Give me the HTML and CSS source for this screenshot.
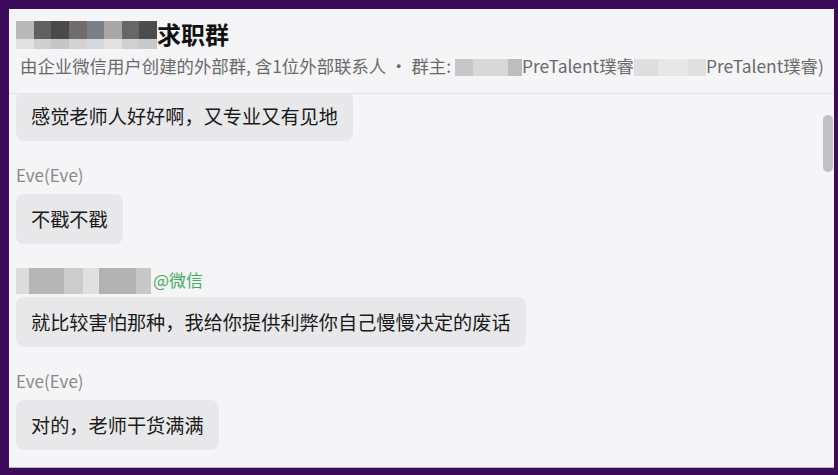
FILE: index.html
```html
<!DOCTYPE html>
<html lang="zh-CN">
<head>
  <meta charset="UTF-8" />
  <title>求职群</title>
  <link rel="stylesheet" href="styles.css">
</head>
<body>
  <div class="window">
    <div class="chat-header">
      <div class="title-row">
        <div class="mosaic title-mosaic">
          <div class="row">
            <span style="background:#b9b7b7"></span>
            <span style="background:#5f6060"></span>
            <span style="background:#4b4849"></span>
            <span style="background:#706c6c"></span>
            <span style="background:#7b8087"></span>
            <span style="background:#aaa6a4"></span>
            <span style="background:#676767"></span>
            <span style="background:#4c4c4c"></span>
          </div>
          <div class="row light">
            <span style="background:#e2e2e2"></span>
            <span style="background:#cfcfcf"></span>
            <span style="background:#c6c6c6"></span>
            <span style="background:#d2d2d2"></span>
            <span style="background:#d6d8db"></span>
            <span style="background:#e4e2e1"></span>
            <span style="background:#d0d0d0"></span>
            <span style="background:#c9c9c9"></span>
          </div>
        </div>
        <h1>求职群</h1>
      </div>
      <div class="subtitle">
        由企业微信用户创建的外部群, 含1位外部联系人 · 群主:
        <span class="blur-box dark"><i style="width:18px;background:#c8c8c8"></i><i style="width:35px;background:#d8d8d8"></i><i style="width:14px;background:#bdbdbd"></i></span>PreTalent璞睿<span class="blur-box soft"><i style="width:24px;background:#dedede"></i><i style="width:30px;background:#e7e7e7"></i><i style="width:18px;background:#dfdfdf"></i></span>PreTalent璞睿)
      </div>
    </div>

    <div class="messages">
      <div class="msg first">
        <div class="bubble">感觉老师人好好啊，又专业又有见地</div>
      </div>

      <div class="msg">
        <div class="sender">Eve(Eve)</div>
        <div class="bubble">不戳不戳</div>
      </div>

      <div class="msg">
        <div class="sender">
          <div class="mosaic name-mosaic">
            <span style="width:13px;background:#dcdcdc"></span>
            <span style="width:35px;background:#b6b6b6"></span>
            <span style="width:19px;background:#cccccc"></span>
            <span style="width:16px;background:#e0e0e0"></span>
            <span style="width:37px;background:#b2b2b2"></span>
            <span style="width:15px;background:#c8c8c8"></span>
          </div>
          <span class="wechat">@微信</span>
        </div>
        <div class="bubble">就比较害怕那种，我给你提供利弊你自己慢慢决定的废话</div>
      </div>

      <div class="msg">
        <div class="sender">Eve(Eve)</div>
        <div class="bubble">对的，老师干货满满</div>
      </div>

      <div class="scroll-thumb"></div>
    </div>
  </div>
</body>
</html>
```

FILE: styles.css
```css
body {
  margin: 0;
  background-color: #3c0b5c;
  font-family: "Noto Sans CJK SC", "Noto Sans", sans-serif;
  padding: 9px 4px 7px 9px;
  height: 475px;
  box-sizing: border-box;
  overflow: hidden;
}

.window {
  background-color: #f5f5f7;
  height: 459px;
  display: flex;
  flex-direction: column;
  overflow: hidden;
  border-bottom: 1px solid #b9b2c0;
  box-sizing: border-box;
}

.chat-header {
  padding: 10px 8px 0 7px;
  height: 85px;
  box-sizing: border-box;
  border-bottom: 1px solid #e4e4e6;
  flex-shrink: 0;
}

.title-row {
  display: flex;
  align-items: center;
  height: 30px;
}

.title-row h1 {
  margin: 0;
  font-size: 24px;
  font-weight: 700;
  color: #111;
  line-height: 30px;
}

.mosaic {
  display: flex;
}

.title-mosaic {
  flex-direction: column;
  width: 141px;
  height: 28px;
  margin-top: 2px;
}

.title-mosaic .row {
  display: flex;
  height: 18px;
}

.title-mosaic .row.light {
  height: 10px;
}

.title-mosaic .row span {
  flex: 1;
}

.subtitle {
  margin: 6px 0 0 4px;
  font-size: 17.4px;
  line-height: 22px;
  color: #6a6a6a;
  white-space: nowrap;
}

.blur-box {
  display: inline-flex;
  vertical-align: -3px;
  height: 17px;
}

.blur-box i {
  display: block;
}

.messages {
  position: relative;
  flex: 1;
  overflow: hidden;
  padding: 0 7px;
}

.msg {
  margin-top: 24px;
}

.msg.first {
  margin-top: -3px;
}

.sender {
  display: flex;
  align-items: flex-start;
  height: 24px;
  line-height: 20px;
  margin-bottom: 5px;
  font-size: 17px;
  color: #888;
}

.name-mosaic {
  height: 26px;
  background: linear-gradient(to bottom, transparent 20px, rgba(255, 255, 255, 0.5) 20px);
}

.name-mosaic span {
  display: block;
  height: 100%;
}

.wechat {
  color: #3fac5c;
  margin-left: 2px;
  line-height: 24px;
}

.bubble {
  display: inline-block;
  background-color: #e8e8ea;
  color: #1a1a1a;
  font-size: 19.2px;
  line-height: 24px;
  padding: 13px 15px;
  border-radius: 8px;
}

.scroll-thumb {
  position: absolute;
  right: 1px;
  top: 21px;
  width: 10px;
  height: 57px;
  border-radius: 5px;
  background-color: #c1c1c5;
}
```
